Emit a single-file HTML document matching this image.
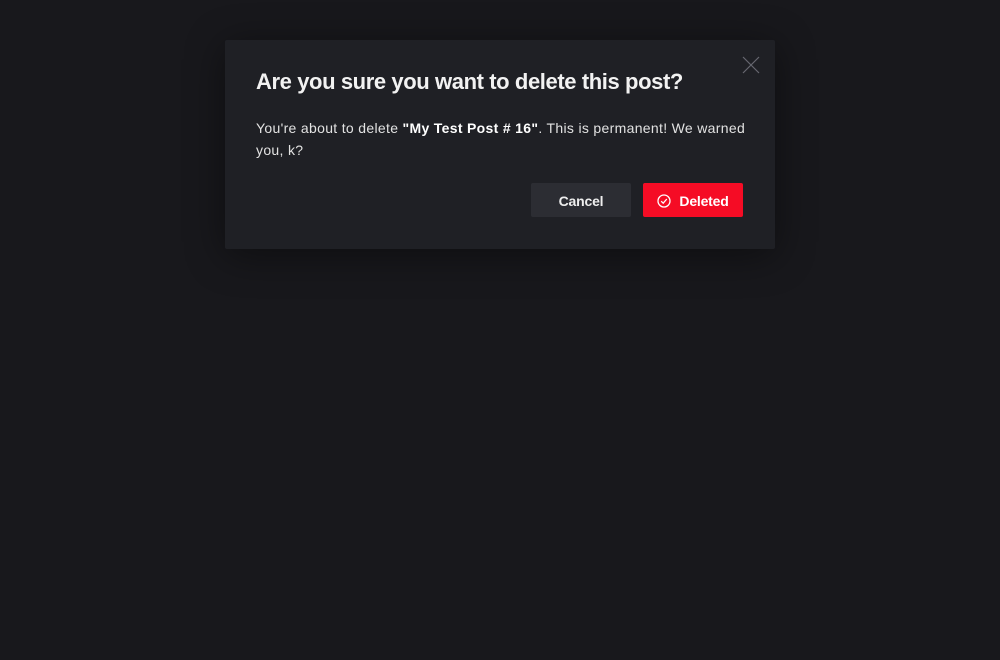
<!DOCTYPE html>
<html><head><meta charset="utf-8"><style>
html,body{margin:0;padding:0;width:1000px;height:660px;background:#18181c;overflow:hidden;font-family:"Liberation Sans",sans-serif;}
.m{position:absolute;left:225px;top:40px;width:550px;height:209px;background:#1f2025;border-radius:2px;box-shadow:0 6px 40px rgba(0,0,0,.45);}
h1{position:absolute;left:31px;top:29px;margin:0;font-size:22px;font-weight:bold;color:#f2f2f2;letter-spacing:-0.4px;}
p{position:absolute;left:31px;top:77px;width:500px;margin:0;font-size:14px;line-height:22px;color:#e2e2e2;letter-spacing:0.32px;}
p b{color:#fff}
.x{position:absolute;left:517px;top:16px;}
.b{position:absolute;top:143px;height:34px;border-radius:2px;font-size:14px;font-weight:bold;color:#eee;display:flex;align-items:center;justify-content:center;letter-spacing:-0.2px;padding-top:2px;box-sizing:border-box;}
.c{left:306px;width:100px;background:#2c2d33;}
.d{left:418px;width:100px;background:#f50c25;color:#fff;}
.d svg{margin-right:8px}
</style></head><body>
<div class="m">
<svg class="x" width="18" height="18" viewBox="0 0 18 18"><path d="M1 1L17 17M17 1L1 17" stroke="#666870" stroke-width="1.2"/></svg>
<h1>Are you sure you want to delete this post?</h1>
<p>You're about to delete <b>"My Test Post # 16"</b>. This is permanent! We warned<br>you, k?</p>
<div class="b c">Cancel</div>
<div class="b d"><svg width="14" height="14" viewBox="0 0 14 14"><circle cx="7" cy="7" r="6" fill="none" stroke="#fff" stroke-width="1.3"/><path d="M4.2 7.2L6.2 9.2L9.8 5" fill="none" stroke="#fff" stroke-width="1.3"/></svg>Deleted</div>
</div>
</body></html>
